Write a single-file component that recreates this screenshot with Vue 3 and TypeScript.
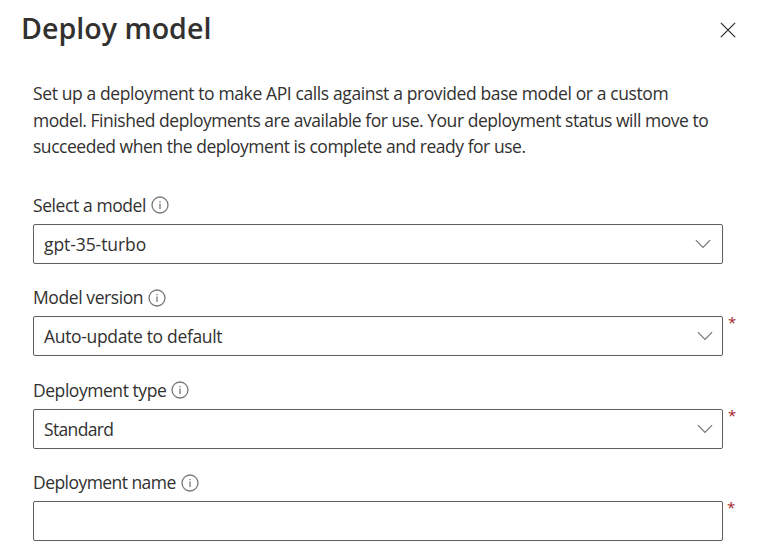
<script setup lang="ts">
interface Field {
  id: string
  label: string
  value: string
  kind: 'select' | 'text'
  required: boolean
}

const intro: string[] = [
  'Set up a deployment to make API calls against a provided base model or a custom',
  'model. Finished deployments are available for use. Your deployment status will move to',
  'succeeded when the deployment is complete and ready for use.',
]

const fields: Field[] = [
  { id: 'model', label: 'Select a model', value: 'gpt-35-turbo', kind: 'select', required: false },
  { id: 'version', label: 'Model version', value: 'Auto-update to default', kind: 'select', required: true },
  { id: 'type', label: 'Deployment type', value: 'Standard', kind: 'select', required: true },
  { id: 'name', label: 'Deployment name', value: '', kind: 'text', required: true },
]
</script>

<template>
  <main class="panel">
    <header class="header">
      <h1 class="title">Deploy model</h1>
      <button class="close" type="button" aria-label="Close">
        <svg width="16" height="16" viewBox="0 0 16 16">
          <path d="M0.9 0.9 15.1 15.1M15.1 0.9 0.9 15.1" />
        </svg>
      </button>
    </header>

    <p class="intro">
      <span v-for="(line, i) in intro" :key="i" class="line" :class="`line-${i}`">{{ line }}</span>
    </p>

    <section class="fields">
      <div v-for="field in fields" :key="field.id" class="field" :class="`field-${field.id}`">
        <div class="label">
          <span class="label-text">{{ field.label }}</span>
          <svg class="info" width="18" height="18" viewBox="0 0 18 18">
            <circle cx="9" cy="9" r="8" />
            <path d="M9 7.6V13" />
            <path class="dot" d="M9 4.9V6.2" />
          </svg>
        </div>
        <div class="row">
          <div class="box">
            <span class="value">{{ field.value }}</span>
            <svg v-if="field.kind === 'select'" class="chevron" width="16" height="10" viewBox="0 0 16 10">
              <path d="M0.9 1.2 8 8.3 15.1 1.2" />
            </svg>
          </div>
          <span v-if="field.required" class="required">*</span>
        </div>
      </div>
    </section>
  </main>
</template>

<style>
body {
  background: #fff;
}
</style>

<style scoped>
.panel {
  box-sizing: border-box;
  width: 761px;
  height: 557px;
  overflow: hidden;
  background: #fff;
  color: #323130;
  font-family: 'Open Sans', 'Noto Sans', sans-serif;
  font-size: 17.5px;
}
.header {
  display: flex;
  justify-content: space-between;
  height: 60px;
  padding: 0 25px 0 21px;
}
.title {
  margin: 0;
  font-size: 28.6px;
  font-weight: 600;
  line-height: 55px;
  white-space: nowrap;
}
.close {
  display: flex;
  margin: 22px 0 0;
  padding: 0;
  width: 16px;
  height: 16px;
  border: 0;
  background: none;
}
.close path {
  fill: none;
  stroke: #323130;
  stroke-width: 1.3;
}
.intro {
  margin: 20px 0 0;
  padding-left: 33px;
  height: 110px;
}
.line {
  display: block;
  line-height: 26.5px;
  letter-spacing: -0.467px;
  white-space: nowrap;
}
.line-0 {
  letter-spacing: -0.385px;
}
.fields {
  padding-left: 33px;
}
.field {
  height: 92.4px;
}
.label {
  display: flex;
  align-items: center;
  gap: 5px;
  height: 30px;
  margin-bottom: 4px;
  line-height: 30px;
  letter-spacing: -0.41px;
  white-space: nowrap;
}
.field-version .label,
.field-name .label {
  height: 31px;
  line-height: 31px;
  margin-bottom: 3px;
}
.field-type .label {
  letter-spacing: -0.45px;
}
.field-name .label {
  letter-spacing: -0.55px;
}
.info {
  flex: none;
  fill: none;
  stroke: #797775;
  stroke-width: 1.3;
}
.row {
  display: flex;
  align-items: flex-start;
}
.box {
  box-sizing: border-box;
  display: flex;
  align-items: center;
  justify-content: space-between;
  width: 690px;
  height: 40px;
  padding: 0 9px 0 10px;
  border: 1px solid #605e5c;
  border-radius: 2px;
}
.field-model .box {
  padding-right: 11px;
}
.field-model .value {
  letter-spacing: -0.08px;
}
.field-version .value {
  letter-spacing: -0.33px;
}
.field-type .value {
  letter-spacing: -0.66px;
}
.chevron {
  fill: none;
  stroke: #797775;
  stroke-width: 1.2;
}
.required {
  margin-left: 5px;
  color: #a4262c;
  font-size: 15px;
  line-height: 12px;
}
.field-name .required {
  margin-left: 4px;
}
</style>
